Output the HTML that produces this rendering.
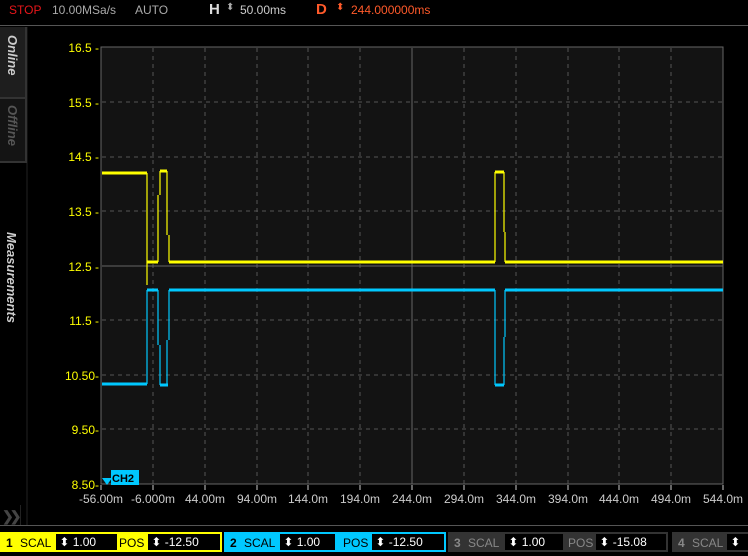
<!DOCTYPE html>
<html><head><meta charset="utf-8"><style>
body{margin:0;width:748px;height:556px;background:#000;overflow:hidden;font-family:"Liberation Sans",sans-serif;position:relative}
.a{position:absolute;white-space:nowrap}
.tab{position:absolute;left:0;width:25px;border-right:2px solid #333;border-bottom:2px solid #333}
.vt{position:absolute;writing-mode:vertical-rl;font-weight:bold;font-style:italic;font-size:13px}
.ch{position:absolute;top:532px;height:20px;font-size:12px;line-height:16px;box-sizing:border-box}
.ch span{position:absolute;top:1px}
.inb{position:absolute;top:0;height:16px;background:#000;color:#fff;line-height:16px;font-size:12px;white-space:nowrap}
</style></head><body>
<div class="a" style="left:9px;top:3px;font-size:12px;color:#e8161a">STOP</div>
<div class="a" style="left:52px;top:3px;font-size:12px;color:#aaa">10.00MSa/s</div>
<div class="a" style="left:135px;top:3px;font-size:12px;color:#aaa">AUTO</div>
<div class="a" style="left:209px;top:1px;font-size:15px;font-weight:bold;color:#ddd">H</div>
<div class="a" style="left:226px;top:2px;font-size:10px;color:#aaa">⬍</div>
<div class="a" style="left:240px;top:3px;font-size:12px;color:#ccc">50.00ms</div>
<div class="a" style="left:316px;top:1px;font-size:15px;font-weight:bold;color:#ff5a2a">D</div>
<div class="a" style="left:336px;top:2px;font-size:10px;color:#ff5a2a">⬍</div>
<div class="a" style="left:351px;top:3px;font-size:12px;color:#ff5a2a">244.000000ms</div>
<div class="a" style="left:0;top:25px;width:748px;height:1px;background:#555"></div>
<div class="a" style="left:26px;top:27px;width:2px;height:498px;background:#111"></div>
<div class="tab" style="top:27px;height:70px;background:#1e1e1e"><div class="vt" style="left:5px;top:8px;color:#ccc">Online</div></div>
<div class="tab" style="top:99px;height:62px;background:#141414"><div class="vt" style="left:5px;top:6px;color:#555">Offline</div></div>
<div class="vt" style="left:4px;top:232px;color:#ccc">Measurements</div>
<div class="a" style="left:2px;top:508px;font-size:14px;font-weight:bold;color:#444;letter-spacing:-4px">❯❯</div>
<div class="a" style="left:20px;top:505px;width:1px;height:20px;background:#222"></div>
<div class="a" style="left:0;top:525px;width:748px;height:1px;background:#555"></div>
<svg class="a" style="left:0;top:0" width="748" height="530">
<rect x="101" y="47" width="622" height="437" fill="#131313" stroke="#666" stroke-width="1"/>
<g stroke="#555" stroke-dasharray="4,4" stroke-width="1">
<line x1="153" y1="48" x2="153" y2="484"/><line x1="205" y1="48" x2="205" y2="484"/><line x1="257" y1="48" x2="257" y2="484"/><line x1="308" y1="48" x2="308" y2="484"/><line x1="360" y1="48" x2="360" y2="484"/><line x1="464" y1="48" x2="464" y2="484"/><line x1="516" y1="48" x2="516" y2="484"/><line x1="568" y1="48" x2="568" y2="484"/><line x1="619" y1="48" x2="619" y2="484"/><line x1="671" y1="48" x2="671" y2="484"/>
<line x1="102" y1="102" x2="723" y2="102"/><line x1="102" y1="157" x2="723" y2="157"/><line x1="102" y1="211" x2="723" y2="211"/><line x1="102" y1="320" x2="723" y2="320"/><line x1="102" y1="375" x2="723" y2="375"/><line x1="102" y1="429" x2="723" y2="429"/>
</g>
<line x1="412" y1="48" x2="412" y2="484" stroke="#666"/><line x1="102" y1="266" x2="723" y2="266" stroke="#666"/>
<g fill="#ffff00" font-size="12" text-anchor="end">
<text x="99" y="52">16.5 -</text><text x="99" y="107">15.5 -</text><text x="99" y="161">14.5 -</text><text x="99" y="216">13.5 -</text><text x="99" y="271">12.5 -</text><text x="99" y="325">11.5 -</text><text x="99" y="380">10.50-</text><text x="99" y="434">9.50-</text><text x="99" y="489">8.50-</text>
</g>
<g stroke="#ccc"><line x1="101" y1="485" x2="101" y2="490"/><line x1="153" y1="485" x2="153" y2="490"/><line x1="205" y1="485" x2="205" y2="490"/><line x1="257" y1="485" x2="257" y2="490"/><line x1="308" y1="485" x2="308" y2="490"/><line x1="360" y1="485" x2="360" y2="490"/><line x1="412" y1="485" x2="412" y2="490"/><line x1="464" y1="485" x2="464" y2="490"/><line x1="516" y1="485" x2="516" y2="490"/><line x1="568" y1="485" x2="568" y2="490"/><line x1="619" y1="485" x2="619" y2="490"/><line x1="671" y1="485" x2="671" y2="490"/><line x1="723" y1="485" x2="723" y2="490"/></g>
<g fill="#ccc" font-size="12" text-anchor="middle">
<text x="101" y="503">-56.00m</text><text x="153" y="503">-6.000m</text><text x="205" y="503">44.00m</text><text x="257" y="503">94.00m</text><text x="308" y="503">144.0m</text><text x="360" y="503">194.0m</text><text x="412" y="503">244.0m</text><text x="464" y="503">294.0m</text><text x="516" y="503">344.0m</text><text x="568" y="503">394.0m</text><text x="619" y="503">444.0m</text><text x="671" y="503">494.0m</text><text x="723" y="503">544.0m</text>
</g>
<g fill="none" stroke-width="3">
<path stroke="#00c8ff" d="M102 384 H147 M147 290 H158 M160 385 H168 M169 290 H495 M495 385 H504 M505 290 H723"/>
<path stroke="#ffff00" d="M102 173 H147 M147 262 H158 M160 171 H167 M169 262 H495 M495 172 H504 M505 262 H723"/>
</g>
<g stroke-width="1.2" fill="none">
<path stroke="#00c8ff" d="M147 384 V290 M158 290 V345 M160 345 V385 M167 385 V340 M169 340 V290 M495 290 V385 M504 385 V337 M505 337 V290"/>
<path stroke="#ffff00" d="M147 173 V285 M158 262 V195 M160 195 V171 M167 171 V235 M169 235 V262 M495 262 V172 M504 172 V232 M505 232 V262"/>
</g>
<polygon points="102,478 112,478 107,485" fill="#00c8ff"/>
<rect x="111" y="470" width="28" height="15" fill="#00c8ff"/>
<text x="112" y="482" font-size="11" font-weight="bold" fill="#000">CH2</text>
</svg>
<div class="ch" style="left:0;width:222px;border:2px solid #ffff00;background:#ffff00;color:#000">
<span style="left:4px;font-weight:bold">1</span><span style="left:18px">SCAL</span>
<div class="inb" style="left:54px;width:61px">&nbsp;⬍&nbsp;1.00</div><span style="left:117px">POS</span>
<div class="inb" style="left:146px;width:72px">&nbsp;⬍&nbsp;-12.50</div>
</div>
<div class="ch" style="left:224px;width:222px;border:2px solid #00c8ff;background:#00c8ff;color:#000">
<span style="left:4px;font-weight:bold">2</span><span style="left:18px">SCAL</span>
<div class="inb" style="left:54px;width:55px">&nbsp;⬍&nbsp;1.00</div><span style="left:117px">POS</span>
<div class="inb" style="left:146px;width:72px">&nbsp;⬍&nbsp;-12.50</div>
</div>
<div class="ch" style="left:448px;width:220px;border:2px solid #333;background:#333;color:#888">
<span style="left:4px;font-weight:bold">3</span><span style="left:18px">SCAL</span>
<div class="inb" style="left:55px;width:58px">&nbsp;⬍&nbsp;1.00</div><span style="left:118px">POS</span>
<div class="inb" style="left:146px;width:70px">&nbsp;⬍&nbsp;-15.08</div>
</div>
<div class="ch" style="left:672px;width:90px;border:2px solid #333;background:#333;color:#888">
<span style="left:4px;font-weight:bold">4</span><span style="left:18px">SCAL</span>
<div class="inb" style="left:53px;width:40px">&nbsp;⬍</div>
</div>
</body></html>
